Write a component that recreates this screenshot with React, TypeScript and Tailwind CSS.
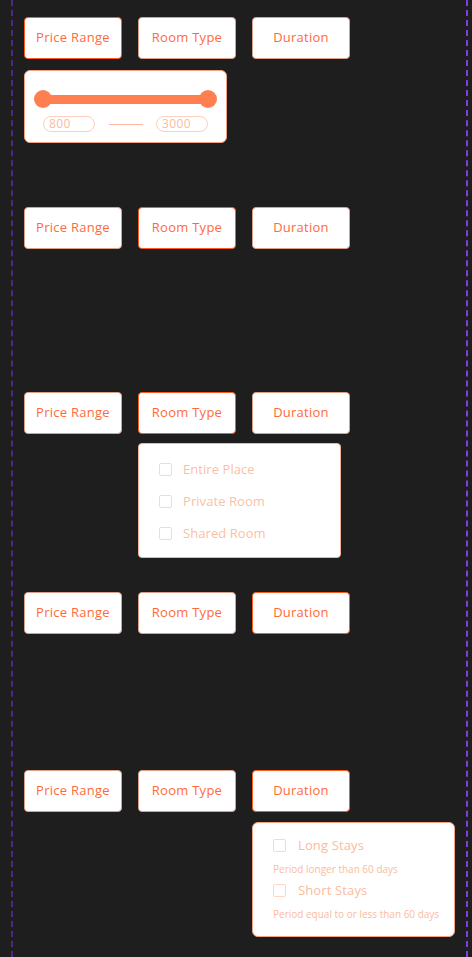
import React from "react";

const font = { fontFamily: '"Open Sans", "Liberation Sans", sans-serif' };

function Btn({ label, active }: { label: string; active?: boolean }) {
  return (
    <div
      className={
        "w-[98px] h-[42px] bg-white rounded-[4px] flex items-center justify-center text-[13px] tracking-[0.02em] text-[#ff6a3a] " +
        (active ? "border-[1.5px] border-[#ff5a1f]" : "border border-[#dba088]")
      }
    >
      {label}
    </div>
  );
}

function Row({ active }: { active: number }) {
  return (
    <div className="flex gap-[16px]">
      <Btn label="Price Range" active={active === 0} />
      <Btn label="Room Type" active={active === 1} />
      <Btn label="Duration" active={active === 2} />
    </div>
  );
}

function Check() {
  return <div className="w-[13px] h-[13px] rounded-[2px] border border-[#fdd6c6] bg-white shrink-0" />;
}

export default function App() {
  return (
    <div className="min-h-[957px] w-[472px] bg-[#1e1e1e] flex" style={font}>
      <div className="ml-[11px] w-[457px] min-h-[957px] border-l-2 border-r-2 border-dashed border-l-[#4a2a85] border-r-[#7b3de6] pl-[11px] pt-[17px]">
        {/* Section 1 */}
        <Row active={0} />
        <div className="mt-[11px] w-[203px] h-[73px] bg-white rounded-[6px] border border-[#f4a283] flex flex-col items-center">
          <div className="mt-[19px] relative w-[183px] h-[18px] flex items-center">
            <div className="absolute left-[9px] right-[9px] h-[9px] bg-[#ff7f50]" />
            <div className="absolute left-0 w-[18px] h-[18px] rounded-full bg-[#ff7f50]" />
            <div className="absolute right-0 w-[18px] h-[18px] rounded-full bg-[#ff7f50]" />
          </div>
          <div className="mt-[8px] w-[165px] flex items-center justify-between">
            <div className="w-[52px] h-[16px] rounded-full border border-[#fcd0bd] text-[12px] tracking-[0.03em] leading-[14px] text-[#fbbca3] pl-[5px]">800</div>
            <div className="w-[34px] h-px bg-[#fbb89e]" />
            <div className="w-[52px] h-[16px] rounded-full border border-[#fcd0bd] text-[12px] tracking-[0.03em] leading-[14px] text-[#fbbca3] pl-[5px]">3000</div>
          </div>
        </div>

        {/* Section 2 */}
        <div className="mt-[64px]">
          <Row active={1} />
        </div>

        {/* Section 3 */}
        <div className="mt-[143px]">
          <Row active={1} />
          <div className="mt-[9px] ml-[114px] w-[203px] h-[115px] bg-white rounded-[4px] border border-[#f4b49a] pl-[20px] pt-[19px] flex flex-col gap-[19px]">
            {["Entire Place", "Private Room", "Shared Room"].map((t) => (
              <div key={t} className="flex items-center h-[13px]">
                <Check />
                <span className="ml-[11px] text-[13px] tracking-[0.005em] text-[#fbbfa5] leading-none">{t}</span>
              </div>
            ))}
          </div>
        </div>

        {/* Section 4 */}
        <div className="mt-[34px]">
          <Row active={2} />
        </div>

        {/* Section 5 */}
        <div className="mt-[136px]">
          <Row active={2} />
          <div className="mt-[10px] ml-[228px] w-[203px] h-[115px] bg-white rounded-[6px] border border-[#f4a283] pl-[20px] pt-[16px] flex flex-col">
            <div className="flex items-center h-[13px]">
              <Check />
              <span className="ml-[12px] text-[13px] tracking-[0.01em] text-[#fbbba0] leading-none">Long Stays</span>
            </div>
            <div className="mt-[12px] text-[10px] leading-none text-[#fbbba0]">Period longer than 60 days</div>
            <div className="mt-[10px] flex items-center h-[13px]">
              <Check />
              <span className="ml-[12px] text-[13px] tracking-[0.01em] text-[#fbbba0] leading-none">Short Stays</span>
            </div>
            <div className="mt-[12px] text-[10px] leading-none text-[#fbbba0]">Period equal to or less than 60 days</div>
          </div>
        </div>
      </div>
    </div>
  );
}
